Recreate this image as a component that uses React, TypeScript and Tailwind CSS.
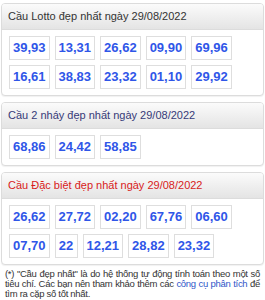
import React from "react";

const font = { fontFamily: '"Liberation Sans", Arial, sans-serif' };

function Card({ title, titleClass, rows }: { title: string; titleClass: string; rows: string[][] }) {
  return (
    <div className="mx-[1px] rounded-[4px] border border-[#dcdcdc] bg-white overflow-hidden shadow-[0_1px_1px_rgba(0,0,0,0.06)]">
      <div className={`h-[26px] flex items-center px-[6px] border-b border-[#dcdcdc] bg-gradient-to-b from-[#fbfbfb] to-[#e4e4e4] text-[11px] ${titleClass}`}>
        {title}
      </div>
      <div className="flex flex-col gap-[5px] pl-[7px] pr-[6px] pt-[6px] pb-[6px]">
        {rows.map((r, i) => (
          <div key={i} className="flex gap-[5px]">
            {r.map((n, j) => (
              <div
                key={j}
                className="h-[24px] flex items-center justify-center px-[3px] min-w-[23px] border border-[#dedede] text-[13px] font-bold text-[#2f56e8]"
              >
                {n}
              </div>
            ))}
          </div>
        ))}
      </div>
    </div>
  );
}

export default function App() {
  return (
    <div className="w-[265px] h-[300px] bg-white pt-[3px] overflow-hidden" style={font}>
      <div className="flex flex-col gap-[6px]">
        <Card
          title="Cầu Lotto đẹp nhất ngày 29/08/2022"
          titleClass="text-[#333333]"
          rows={[
            ["39,93", "13,31", "26,62", "09,90", "69,96"],
            ["16,61", "38,83", "23,32", "01,10", "29,92"],
          ]}
        />
        <Card
          title="Cầu 2 nháy đẹp nhất ngày 29/08/2022"
          titleClass="text-[#363a78]"
          rows={[["68,86", "24,42", "58,85"]]}
        />
        <Card
          title="Cầu Đặc biệt đẹp nhất ngày 29/08/2022"
          titleClass="text-[#d81b1b]"
          rows={[
            ["26,62", "27,72", "02,20", "67,76", "06,60"],
            ["07,70", "22", "12,21", "28,82", "23,32"],
          ]}
        />
      </div>
      <div className="mt-[4px] px-[5px] text-[9.5px] leading-[10px] tracking-[-0.3px] text-[#333333]">
        <div className="whitespace-nowrap text-justify [text-align-last:justify]">
          (*) "Cầu đẹp nhất" là do hệ thống tự động tính toán theo một số
        </div>
        <div className="whitespace-nowrap text-justify [text-align-last:justify]">
          tiêu chí. Các bạn nên tham khảo thêm các <span className="text-[#2f56c8]">công cụ phân tích</span> để
        </div>
        <div className="whitespace-nowrap">tìm ra cặp số tốt nhất.</div>
      </div>
    </div>
  );
}
